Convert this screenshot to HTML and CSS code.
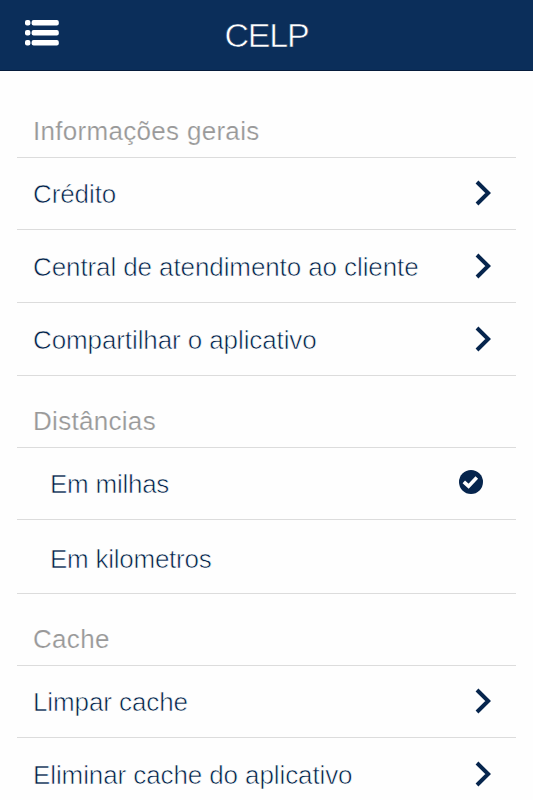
FILE: index.html
```html
<!DOCTYPE html>
<html lang="pt">
<head>
    <meta charset="UTF-8">
    <meta name="viewport" content="width=device-width, initial-scale=1.0">
    <title>CELP</title>
    <link rel="stylesheet" href="styles.css">
</head>
<body>
    <header class="topbar">
        <svg class="menu-icon" viewBox="0 0 34 26">
            <rect x="0" y="0" width="5.4" height="5.4" rx="2"/>
            <rect x="6.6" y="0" width="27.2" height="5.4" rx="2"/>
            <rect x="0" y="10" width="5.4" height="5.4" rx="2"/>
            <rect x="6.6" y="10" width="27.2" height="5.4" rx="2"/>
            <rect x="0" y="20" width="5.4" height="5.4" rx="2"/>
            <rect x="6.6" y="20" width="27.2" height="5.4" rx="2"/>
        </svg>
        <h1>CELP</h1>
    </header>

    <main class="settings">
        <h2 class="first"><span>Informações gerais</span></h2>
        <ul>
            <li>
                <span>Crédito</span>
                <svg class="arrow" viewBox="0 0 16 26"><path d="M2 2 L13.2 13 L2 24"/></svg>
            </li>
            <li>
                <span>Central de atendimento ao cliente</span>
                <svg class="arrow" viewBox="0 0 16 26"><path d="M2 2 L13.2 13 L2 24"/></svg>
            </li>
            <li>
                <span>Compartilhar o aplicativo</span>
                <svg class="arrow" viewBox="0 0 16 26"><path d="M2 2 L13.2 13 L2 24"/></svg>
            </li>
        </ul>

        <h2><span>Distâncias</span></h2>
        <ul class="options">
            <li>
                <span>Em milhas</span>
                <svg class="check" viewBox="0 0 24 24">
                    <circle cx="12" cy="12" r="12"/>
                    <path d="M4.8 11.8 L9.6 16.2 L17.8 7.6"/>
                </svg>
            </li>
            <li><span>Em kilometros</span></li>
        </ul>

        <h2><span>Cache</span></h2>
        <ul>
            <li>
                <span>Limpar cache</span>
                <svg class="arrow" viewBox="0 0 16 26"><path d="M2 2 L13.2 13 L2 24"/></svg>
            </li>
            <li>
                <span>Eliminar cache do aplicativo</span>
                <svg class="arrow" viewBox="0 0 16 26"><path d="M2 2 L13.2 13 L2 24"/></svg>
            </li>
        </ul>
    </main>
</body>
</html>
```
FILE: styles.css
```css
* {
    box-sizing: border-box;
}
body {
    margin: 0;
    height: 800px;
    overflow: hidden;
    background-color: #fefefe;
    font-family: "Liberation Sans", Arial, sans-serif;
}
.topbar {
    display: grid;
    grid-template-columns: 34px 1fr 34px;
    align-items: center;
    height: 71px;
    padding: 0 25px;
    background-color: #0b2e5a;
    border-bottom: 1px solid #061c3c;
}
.menu-icon {
    width: 34px;
    height: 26px;
    margin-bottom: 5px;
    fill: #ffffff;
}
h1 {
    margin: 0;
    text-align: center;
    font-size: 34px;
    font-weight: normal;
    line-height: 40px;
    letter-spacing: -1.2px;
    color: #ffffff;
    -webkit-text-stroke: 0.6px #0b2e5a;
}
.settings {
    padding: 0 17px;
}
h2 {
    display: flex;
    align-items: flex-end;
    height: 72px;
    margin: 0;
    padding: 0 16px 11px;
    border-bottom: 1px solid #dcdcdc;
    font-size: 26px;
    font-weight: normal;
    line-height: 30px;
    letter-spacing: 0.3px;
    color: #999999;
    -webkit-text-stroke: 0.2px #fefefe;
}
h2.first {
    height: 87px;
}
ul {
    margin: 0;
    padding: 0;
    list-style: none;
}
li {
    display: flex;
    justify-content: space-between;
    align-items: center;
    height: 73px;
    padding: 2px 25px 0 16px;
    border-bottom: 1px solid #dcdcdc;
    font-size: 26px;
    line-height: 30px;
    letter-spacing: -0.1px;
    color: #001f47;
    -webkit-text-stroke: 0.6px #fefefe;
}
li:first-child {
    height: 72px;
    padding-top: 0;
}
.options li {
    padding-left: 33px;
    padding-right: 33px;
    letter-spacing: -0.25px;
}
.options li:last-child {
    height: 74px;
    padding-top: 4px;
}
.arrow {
    width: 16px;
    height: 26px;
    margin-bottom: 2px;
    fill: none;
    stroke: #06254d;
    stroke-width: 4;
}
.check {
    width: 24px;
    height: 24px;
    margin-bottom: 3px;
    fill: #06254d;
    stroke: none;
}
.check path {
    fill: none;
    stroke: #fefefe;
    stroke-width: 3.6;
}
```
